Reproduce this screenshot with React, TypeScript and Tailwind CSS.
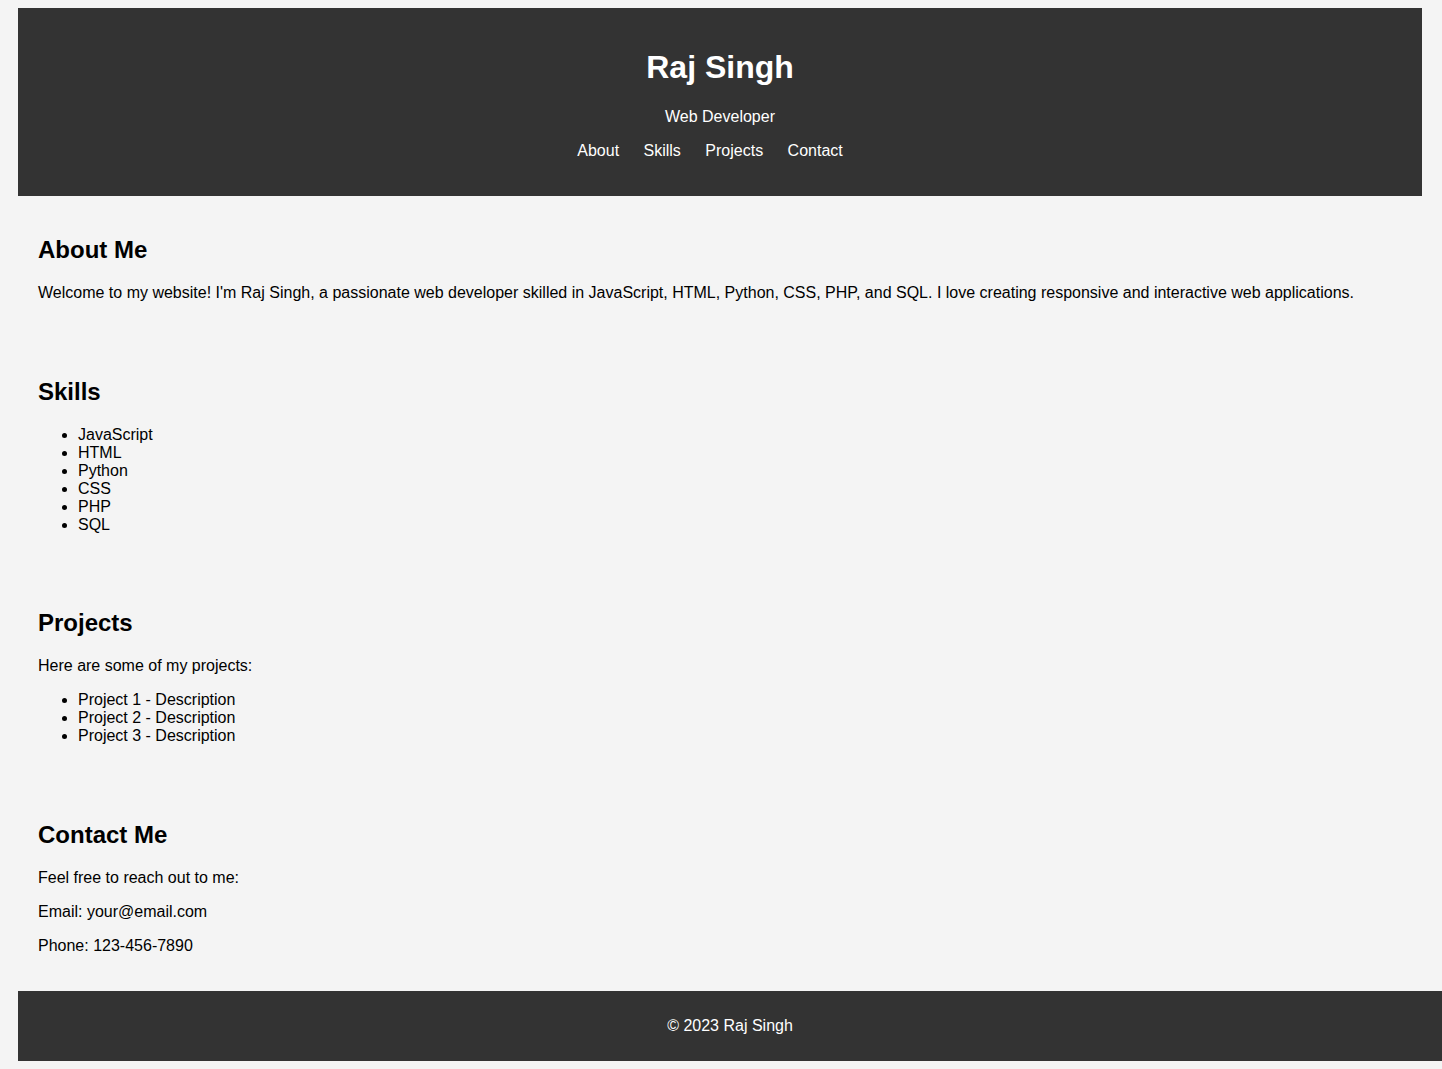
const skills = ['JavaScript', 'HTML', 'Python', 'CSS', 'PHP', 'SQL'];
const projects = ['Project 1 - Description', 'Project 2 - Description', 'Project 3 - Description'];
const navLinks = ['About', 'Skills', 'Projects', 'Contact'];

function SectionTitle({ children }: { children: React.ReactNode }) {
  return <h2 className="my-[19.92px] text-2xl leading-[normal] font-bold">{children}</h2>;
}

export default function App() {
  return (
    <div className="min-h-screen bg-[#f4f4f4] pt-2 pb-2 pl-[18px] font-['Liberation_Sans',Arial,sans-serif] text-base leading-[normal] text-black">
      <header className="mr-5 bg-[#333] p-5 text-center text-white">
        <h1 className="my-[21.44px] text-[32px] leading-[normal] font-bold">Raj Singh</h1>
        <p className="my-4">Web Developer</p>
        <nav>
          <ul className="my-4 list-none p-0">
            {navLinks.map((link) => (
              <li key={link} className="mr-5 inline">
                <a href={`#${link.toLowerCase()}`} className="text-white">
                  {link}
                </a>{' '}
              </li>
            ))}
          </ul>
        </nav>
      </header>

      <main className="mr-5">
        <section id="about" className="p-5">
          <SectionTitle>About Me</SectionTitle>
          <p className="my-4">
            Welcome to my website! I'm Raj Singh, a passionate web developer skilled in JavaScript,
            HTML, Python, CSS, PHP, and SQL. I love creating responsive and interactive web
            applications.
          </p>
        </section>

        <section id="skills" className="p-5">
          <SectionTitle>Skills</SectionTitle>
          <ul className="my-4 list-disc pl-10">
            {skills.map((s) => (
              <li key={s}>{s}</li>
            ))}
          </ul>
        </section>

        <section id="projects" className="p-5">
          <SectionTitle>Projects</SectionTitle>
          <p className="my-4">Here are some of my projects:</p>
          <ul className="my-4 list-disc pl-10">
            {projects.map((p) => (
              <li key={p}>{p}</li>
            ))}
          </ul>
        </section>

        <section id="contact" className="p-5">
          <SectionTitle>Contact Me</SectionTitle>
          <p className="my-4">Feel free to reach out to me:</p>
          <p className="my-4">Email: your@email.com</p>
          <p className="my-4">Phone: 123-456-7890</p>
        </section>
      </main>

      <footer className="bg-[#333] py-2.5 text-center text-white">
        <p className="my-4">© 2023 Raj Singh</p>
      </footer>
    </div>
  );
}
